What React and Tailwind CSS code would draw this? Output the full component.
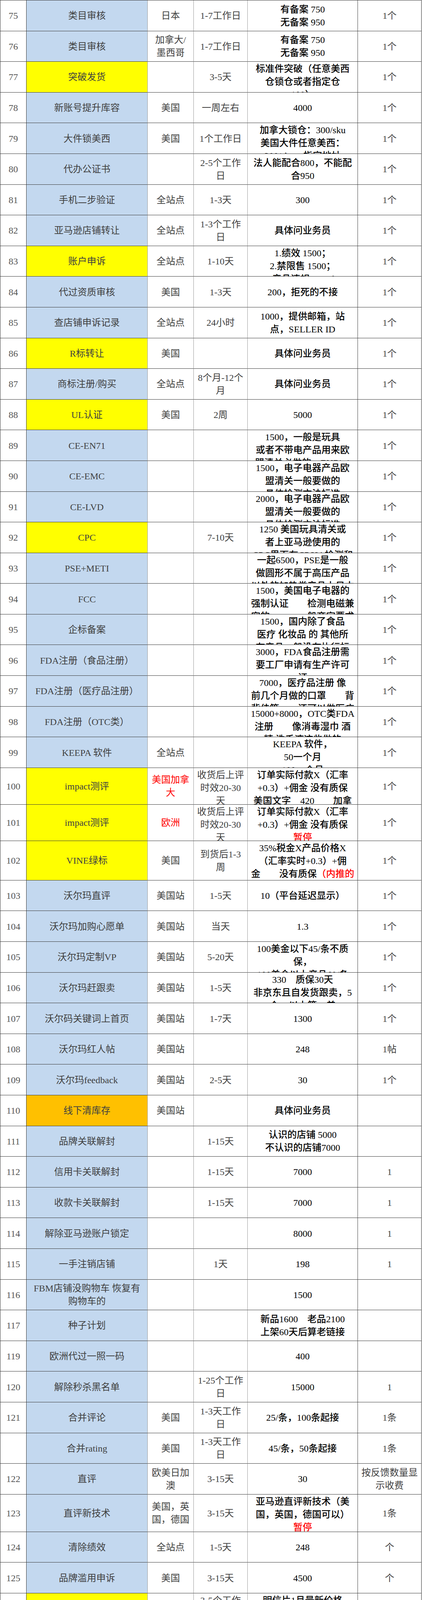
import React from 'react';

// b = blue, y = yellow, o = orange, w = white
const bgMap = {
  b: 'bg-[#c3d8ef]',
  y: 'bg-[#ffff00]',
  o: 'bg-[#ffc000]',
  w: 'bg-white',
};

// [no, item, bg, country, time, price, unit, rowHeight?]
// a string that starts with "!" is shown in red
const rows = [
  [75, '类目审核', 'b', '日本', '1-7工作日', ['有备案 750', '无备案 950'], '1个'],
  [76, '类目审核', 'b', ['加拿大/', '墨西哥'], '1-7工作日', ['有备案 750', '无备案 950'], '1个'],
  [77, '突破发货', 'y', '', '3-5天', ['标准件突破（任意美西', '仓锁仓或者指定仓', '100）'], '1个'],
  [78, '新账号提升库容', 'b', '美国', '一周左右', '4000', '1个'],
  [79, '大件锁美西', 'b', '美国', '1个工作日', ['加拿大锁仓：300/sku', '美国大件任意美西：', '300/sku，指定地址'], '1个'],
  [80, '代办公证书', 'b', '', ['2-5个工作', '日'], ['法人能配合800，不能配', '合950'], '1个'],
  [81, '手机二步验证', 'b', '全站点', '1-3天', '300', '1个'],
  [82, '亚马逊店铺转让', 'b', '全站点', ['1-3个工作', '日'], '具体问业务员', '1个'],
  [83, '账户申诉', 'y', '全站点', '1-10天', ['1.绩效 1500；', '2.禁限售 1500；', '3.产品违规 2500；'], '1个'],
  [84, '代过资质审核', 'b', '美国', '1-3天', '200，拒死的不接', '1个'],
  [85, '查店铺申诉记录', 'b', '全站点', '24小时', ['1000，提供邮箱，站', '点，SELLER ID'], '1个'],
  [86, 'R标转让', 'y', '美国', '', '具体问业务员', '1个'],
  [87, '商标注册/购买', 'b', '全站点', ['8个月-12个', '月'], '具体问业务员', '1个'],
  [88, 'UL认证', 'y', '美国', '2周', '5000', '1个'],
  [89, 'CE-EN71', 'b', '', '', ['1500，一般是玩具', '或者不带电产品用来欧', '盟清关必做的，EN71-1'], '1个'],
  [90, 'CE-EMC', 'b', '', '', ['1500，电子电器产品欧', '盟清关一般要做的', '具体检测方法标准'], '1个'],
  [91, 'CE-LVD', 'b', '', '', ['2000，电子电器产品欧', '盟清关一般要做的', '具体检测方法标准'], '1个'],
  [92, 'CPC', 'y', '', '7-10天', ['1250 美国玩具清关或', '者上亚马逊使用的', 'CPC里面有CPSIA检测和'], '1个'],
  [93, 'PSE+METI', 'b', '', '', ['一起6500，PSE是一般', '做圆形不属于高压产品', '以外的加热类产品上日本'], '1个'],
  [94, 'FCC', 'b', '', '', ['1500，美国电子电器的', '强制认证　　检测电磁兼', '容的　　　一般商家要求'], '1个'],
  [95, '企标备案', 'b', '', '', ['1500，国内除了食品', '医疗 化妆品 的 其他所', '有产品一般没有执行标'], '1个'],
  [96, 'FDA注册（食品注册）', 'b', '', '', ['3000，FDA食品注册需', '要工厂申请有生产许可', '证'], '1个'],
  [97, 'FDA注册（医疗品注册）', 'b', '', '', ['7000，医疗品注册 像', '前几个月做的口罩　　背', '背佳等　　还可以做医疗'], '1个'],
  [98, 'FDA注册（OTC类）', 'b', '', '', ['15000+8000，OTC类FDA', '注册　　像消毒湿巾 酒', '精 洗手液这些做的'], '1个'],
  [99, 'KEEPA 软件', 'b', '全站点', '', ['KEEPA 软件，', '50一个月', '100一个月'], '1个'],
  [100, 'impact测评', 'y', ['!美国加拿', '!大'], ['收货后上评', '时效20-30', '天'], ['订单实际付款X（汇率', '+0.3）+佣金 没有质保', '美国文字　420　　加拿'], '1个', 'h-[94px]'],
  [101, 'impact测评', 'y', '!欧洲', ['收货后上评', '时效20-30', '天'], ['订单实际付款X（汇率', '+0.3）+佣金 没有质保', '!暂停'], '1个', 'h-[93px]'],
  [102, 'VINE绿标', 'y', '美国', ['到货后1-3', '周'], ['35%税金X产品价格X', '（汇率实时+0.3）+佣', ['金　　没有质保', '!（内推的']], '1个', 'h-[101px]'],
  [103, '沃尔玛直评', 'b', '美国站', '1-5天', '10（平台延迟显示）', '1个'],
  [104, '沃尔玛加购心愿单', 'b', '美国站', '当天', '1.3', '1个'],
  [105, '沃尔玛定制VP', 'b', '美国站', '5-20天', ['100美金以下45/条不质', '保，', '100美金以上产品60/条'], '1个'],
  [106, '沃尔玛赶跟卖', 'b', '美国站', '1-5天', ['330　质保30天', '非京东且自发货跟卖，5', '个+1以上等，差'], '1个'],
  [107, '沃尔码关键词上首页', 'b', '美国站', '1-7天', '1300', '1个'],
  [108, '沃尔玛红人帖', 'b', '美国站', '', '248', '1帖'],
  [109, '沃尔玛feedback', 'b', '美国站', '2-5天', '30', '1个'],
  [110, '线下清库存', 'o', '美国站', '', '具体问业务员', ''],
  [111, '品牌关联解封', 'b', '', '1-15天', ['认识的店铺 5000', '不认识的店铺7000'], ''],
  [112, '信用卡关联解封', 'b', '', '1-15天', '7000', '1'],
  [113, '收款卡关联解封', 'b', '', '1-15天', '7000', '1'],
  [114, '解除亚马逊账户锁定', 'b', '', '', '8000', '1'],
  [115, '一手注销店铺', 'b', '', '1天', '198', '1'],
  [116, ['FBM店铺没购物车 恢复有', '购物车的'], 'b', '', '', '1500', ''],
  [117, '种子计划', 'b', '', '', ['新品1600　老品2100', '上架60天后算老链接'], ''],
  [119, '欧洲代过一照一码', 'b', '', '', '400', ''],
  [120, '解除秒杀黑名单', 'b', '', ['1-25个工作', '日'], '15000', '1'],
  [121, '合并评论', 'b', '美国', ['1-3天工作', '日'], '25/条，100条起接', '1条'],
  ['', '合并rating', 'b', '美国', ['1-3天工作', '日'], '45/条，50条起接', '1条'],
  [122, '直评', 'b', ['欧美日加', '澳'], '3-15天', '30', ['按反馈数量显', '示收费']],
  [123, '直评新技术', 'b', ['美国，英', '国，德国'], '3-15天', ['亚马逊直评新技术（美', '国，英国，德国可以）', '!暂停'], '1条', 'h-[96px]'],
  [124, '清除绩效', 'b', '全站点', '1-5天', '248', '个'],
  [125, '品牌滥用申诉', 'b', '美国', '3-15天', '4500', '个'],
  [126, '代发明信片', 'y', '美国', ['3-5个工作', '日制作', '3-5个工作'], ['明信片1月最新价格', '美国：', '明信片 4*6　　1.2元'], '张'],
  [127, '内部降佣金', 'b', '', '1-15天', ['质保一个月4800，无质', '保4000'], '个'],
  [128, 'GBC律师案和解/侵权和解', 'b', '', '', '看余额报价', '个'],
  [129, ['消费者告知法案，重新验', '证'], 'w', '', '1-7工作日', ['消费者告知法案，重新', '验证', '消费者告知法案用不了'], '个'],
  [130, ['消费者法案没有申诉入口', '恢复'], 'w', '', '', '3000', '个'],
  [132, '危险品审核', 'w', '欧美', ['1－7个工作', '日'], ['带电产品450', '其它产品650'], '个'],
  [133, '变体不正确警告申诉', 'w', '全站点', '1-7天', '650', '个'],
  [134, '恢复产品编辑权', 'w', '全站点', ['1-10个工作', '日'], '5500', '个'],
  [135, ['纯内部拆变体（被恶意合', '并）'], 'w', '全站点', ['1-3个工作', '日'], '北美 1600　其他 1800', ['按子体asin算', '数量，没有质', '保']],
  [136, '库存瑕疵品恢复', 'w', '', '', ['看库存数量下架原因报', '价报价，提供站点asin', '和后台截图'], ''],
  [137, '品牌滥用被撤销', 'w', '', '', '3500', '个'],
  [138, '英欧EC符合性声明', 'w', '', ['1-3个工作', '日'], '550', '一个asin'],
];

const Line = ({ line }) => {
  const segs = Array.isArray(line) ? line : [line];
  return (
    <div className="whitespace-nowrap">
      {segs.map((s, i) =>
        s.startsWith('!') ? (
          <span key={i} className="text-[#ff0000]">{s.slice(1)}</span>
        ) : (
          <span key={i}>{s}</span>
        )
      )}
    </div>
  );
};

const Cell = ({ value, className }) => {
  const lines = value === '' ? [] : Array.isArray(value) ? value : [value];
  return (
    <div
      className={`min-h-0 flex flex-col items-center [justify-content:safe_center] overflow-hidden text-center border-b border-b-[#3a3a3a] px-1 pt-[2px] ${className}`}
    >
      {lines.map((l, i) => (
        <Line key={i} line={l} />
      ))}
    </div>
  );
};

const App = () => {
  return (
    <div className="bg-white">
      <div className="w-[1079px] border-l border-t border-[#333] font-['Liberation_Serif','Noto_Sans_CJK_SC',serif] text-[24px] leading-[33px]">
        {rows.map((r, i) => {
          const [no, item, bg, country, time, price, unit, h] = r;
          return (
            <div
              key={i}
              className={`grid grid-cols-[67px_310px_118px_138px_282px_163px] grid-rows-[minmax(0,1fr)] overflow-hidden ${h || 'h-[78.6px]'}`}
            >
              <Cell value={String(no)} className="border-r border-r-[#333] text-[#555]" />
              <Cell value={item} className={`border-r border-r-[#9a9a9a] text-[#404040] ${bgMap[bg]}`} />
              <Cell value={country} className="border-r border-r-[#9a9a9a] text-[#404040]" />
              <Cell value={time} className="border-r border-r-[#9a9a9a] text-[#404040]" />
              <Cell value={price} className="border-r border-r-[#444] text-black font-medium" />
              <Cell value={unit} className="border-r border-r-[#333] text-[#404040]" />
            </div>
          );
        })}
      </div>
    </div>
  );
};

export default App;
